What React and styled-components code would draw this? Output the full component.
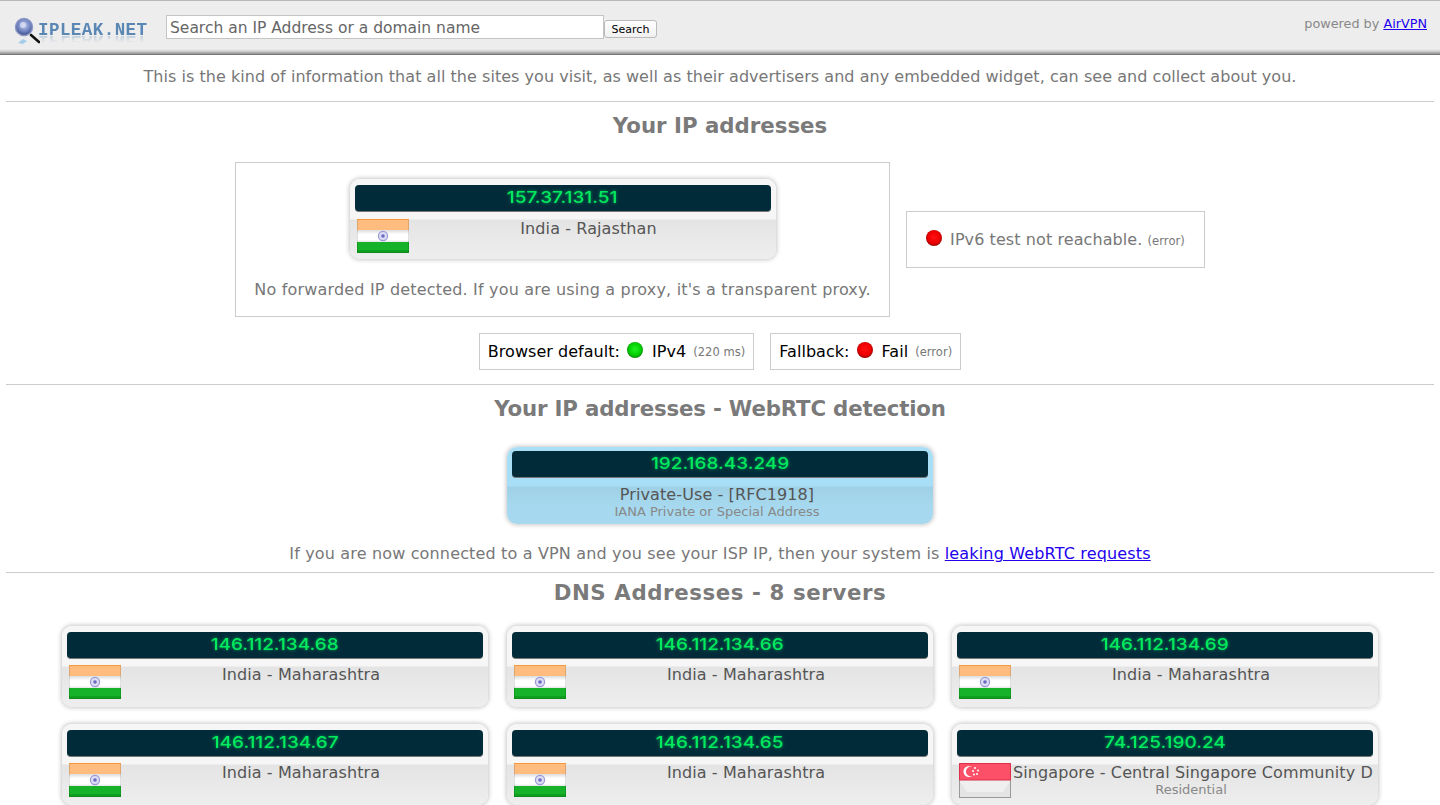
import React from "react";
import styled, { createGlobalStyle } from "styled-components";

const Global = createGlobalStyle`
  html, body { margin: 0; padding: 0; background: #fff; height: 805px; overflow: hidden; }
  body { font-family: "DejaVu Sans", Verdana, sans-serif; color: #777; }
  a { color: #2200ee; }
`;

const Header = styled.header`
  height: 55px;
  box-sizing: border-box;
  border-top: 1px solid #b8b8b8;
  border-bottom: 1px solid #777;
  background: linear-gradient(#ededed 0, #ededed 48px, #d4d4d4 50px, #8f8f8f 53px);
  display: flex;
  align-items: flex-start;
  padding: 14px 13px 0 14px;
`;
const LogoWrap = styled.div`
  width: 134px;
  height: 28px;
  margin-right: 18px;
  margin-top: 1px;
  display: flex;
  align-items: flex-start;
`;
const LogoText = styled.span`
  font-family: "Liberation Mono", monospace;
  font-weight: 700;
  font-size: 17.5px;
  line-height: 18px;
  margin: 5px 0 0 -2px;
  letter-spacing: 0.45px;
  color: #5b87b5;
  -webkit-box-reflect: below -7px linear-gradient(transparent 40%, rgba(255, 255, 255, 0.45));
`;
const SearchInput = styled.input`
  width: 438px;
  height: 24px;
  box-sizing: border-box;
  border: 1px solid #c4c4c4;
  background: #fff;
  font: 15.5px "DejaVu Sans", Verdana, sans-serif;
  color: #666;
  padding: 2px 3px 0;
  outline: none;
  &::placeholder { color: #666; opacity: 1; }
`;
const SearchButton = styled.button`
  width: 53px;
  height: 18px;
  margin-top: 5px;
  box-sizing: border-box;
  border: 1px solid #bbb;
  border-radius: 3px;
  background: linear-gradient(#fff, #f0f0f0);
  font: 11px "DejaVu Sans", Verdana, sans-serif;
  color: #000;
  padding: 0;
`;
const Powered = styled.div`
  margin-left: auto;
  font-size: 12.8px;
  line-height: 18px;
  color: #888;
`;
const Tagline = styled.p`
  margin: 0;
  height: 46px;
  box-sizing: border-box;
  padding-top: 12px;
  line-height: 20px;
  text-align: center;
  font-size: 16px;
  letter-spacing: 0.04px;
  color: #777;
`;
const Section = styled.section`
  margin: 0 6px;
  border-top: 1px solid #ccc;
  padding-top: ${(p) => p.$top}px;
  text-align: center;
`;
const Title = styled.h2`
  margin: 0;
  font-size: 21.3px;
  line-height: 26px;
  font-weight: 700;
  letter-spacing: ${(p) => p.$track || 0}px;
  color: #7a7a7a;
`;
const IpRow = styled.div`
  display: flex;
  justify-content: center;
  align-items: center;
  gap: 16px;
  margin-top: 23px;
`;
const Bordered = styled.div`
  border: 1px solid #ccc;
  box-sizing: border-box;
`;
const MainBox = styled(Bordered)`
  width: 655px;
  height: 155px;
  padding-top: 16px;
  display: flex;
  flex-direction: column;
  align-items: center;
`;
const NoForward = styled.div`
  margin-top: 21px;
  font-size: 16px;
  line-height: 20px;
  letter-spacing: 0.18px;
  color: #777;
`;
const V6Box = styled(Bordered)`
  width: 299px;
  height: 57px;
  display: flex;
  align-items: center;
  justify-content: center;
  gap: 8px;
  font-size: 16px;
  letter-spacing: 0.08px;
  color: #777;
`;
const Led = styled.i`
  display: inline-block;
  width: 16px;
  height: 16px;
  border-radius: 50%;
  flex: none;
  position: relative;
  top: -2px;
  background: radial-gradient(circle at 50% 45%, ${(p) =>
    p.$on
      ? "#22ee22 0, #00d000 50%, #0a7a0a 78%, #666 100%"
      : "#ff1010 0, #ee0000 50%, #8a0000 78%, #666 100%"});
`;
const Small = styled.small`
  font-size: 11.5px;
  color: #777;
`;
const StatusRow = styled.div`
  display: flex;
  justify-content: center;
  gap: 16px;
  margin-top: 16px;
  margin-bottom: 14px;
`;
const StatusBox = styled(Bordered)`
  height: 37px;
  padding: 0 8px;
  display: flex;
  align-items: center;
  gap: 7px;
  font-size: 16px;
  letter-spacing: 0.04px;
  color: #000;
  white-space: nowrap;
`;
const Gap = styled.span`
  margin-left: 2px;
`;
const CardEl = styled.div`
  width: 426px;
  height: ${(p) => p.$height}px;
  box-sizing: border-box;
  border-radius: 10px;
  padding: ${(p) => (p.$blue ? 4 : 6)}px 5px 0;
  flex: none;
  overflow: hidden;
  text-align: center;
  box-shadow: 0 0 4px 1px rgba(0, 0, 0, 0.22);
  background: ${(p) =>
    p.$blue
      ? "linear-gradient(#a9dff6 0, #a9dff6 39px, #9fd0e6 40px, #a6d9ef 60px)"
      : "linear-gradient(#f6f6f6 0, #f6f6f6 40px, #e4e4e4 41px, #eeeeee 100%)"};
`;
const IpBar = styled.div`
  height: 27px;
  border-radius: 4px;
  background: #022b3a;
  border-bottom: 1px solid #777;
  box-sizing: border-box;
  color: #00ea5e;
  font-family: Inter, sans-serif;
  font-weight: 500;
  font-size: 16.5px;
  line-height: 25px;
  text-shadow: 0 0 3px rgba(0, 255, 100, 0.6);
`;
const IpText = styled.span`
  display: inline-block;
  transform: scaleX(1.15);
`;
const CardBody = styled.div`
  display: flex;
  margin-top: ${(p) => p.$gap}px;
  padding: 0 ${(p) => (p.$blue ? 6 : 0)}px 0 2px;
`;
const CardText = styled.div`
  flex: 1;
  min-width: 0;
  overflow: hidden;
  white-space: nowrap;
  padding: 0 4px 0 2px;
  font-size: 16px;
  line-height: 19px;
  letter-spacing: 0.1px;
  color: #555;
`;
const Sub = styled.div`
  font-size: 13px;
  line-height: 15px;
  letter-spacing: 0;
  color: #888;
`;
const FlagSvg = styled.svg`
  flex: none;
  display: block;
`;
const WebRtcCenter = styled.div`
  display: flex;
  justify-content: center;
  margin-top: 25px;
`;
const Leak = styled.p`
  margin: 20px 0 8px;
  font-size: 16px;
  line-height: 20px;
  letter-spacing: 0.16px;
  color: #777;
`;
const DnsGrid = styled.div`
  display: grid;
  grid-template-columns: repeat(3, 426px);
  column-gap: 19px;
  row-gap: 17px;
  justify-content: center;
  margin-top: 20px;
`;

function IndiaFlag() {
  return (
    <FlagSvg width="52" height="34" viewBox="0 0 52 34">
      <defs>
        <linearGradient id="inWhite" x1="0" y1="0" x2="0" y2="1">
          <stop offset="0" stopColor="#dcdcdc" />
          <stop offset="0.35" stopColor="#ffffff" />
          <stop offset="0.8" stopColor="#ffffff" />
          <stop offset="1" stopColor="#e6e6e6" />
        </linearGradient>
      </defs>
      <rect width="52" height="11" fill="#ffbc7e" />
      <rect y="11" width="52" height="12" fill="url(#inWhite)" />
      <rect y="23" width="52" height="11" fill="#16b22a" />
      <rect y="31" width="52" height="3" fill="#0fa020" />
      <circle cx="26" cy="17" r="4.6" fill="#dcdcf4" stroke="#9a9ad8" strokeWidth="1.2" />
      <circle cx="26" cy="17" r="1.8" fill="#6a6ac0" />
      <rect x=".5" y=".5" width="51" height="33" fill="none" stroke="#000" strokeOpacity=".12" />
      <path d="M0 .5H52" stroke="#f2983e" />
    </FlagSvg>
  );
}

function SingaporeFlag() {
  return (
    <FlagSvg width="52" height="35" viewBox="0 0 52 35">
      <rect width="52" height="17" fill="#fb5068" />
      <rect y="17" width="52" height="18" fill="#e4e4e4" />
      <path d="M0 17 L8 29 H44 L52 17Z" fill="#efefef" />
      <circle cx="10" cy="8.5" r="5.5" fill="#fff" />
      <circle cx="12" cy="8.5" r="5" fill="#fb5068" />
      <g fill="#fff">
        <circle cx="16" cy="5" r="1" />
        <circle cx="19" cy="7.5" r="1" />
        <circle cx="14" cy="8" r="1" />
        <circle cx="15" cy="11.5" r="1" />
        <circle cx="18" cy="11" r="1" />
      </g>
      <rect x=".5" y=".5" width="51" height="34" fill="none" stroke="#999" />
      <path d="M.5 .5H51.5V17H.5Z" fill="none" stroke="#dc2f48" />
    </FlagSvg>
  );
}

function Logo() {
  return (
    <LogoWrap>
      <svg width="26" height="28" viewBox="0 0 26 28" style={{ flex: "none" }}>
        <defs>
          <radialGradient id="globe" cx="50%" cy="40%" r="60%">
            <stop offset="0" stopColor="#c4cdf0" />
            <stop offset="0.7" stopColor="#6478b8" />
            <stop offset="1" stopColor="#33406f" />
          </radialGradient>
        </defs>
        <path d="M4 27 L9 23 L13 25 L9 28Z" fill="#a5cdea" />
        <path d="M17 19 L25 26" stroke="#111" strokeWidth="2.6" strokeLinecap="round" />
        <circle cx="10" cy="11" r="8.5" fill="url(#globe)" stroke="#8b97c6" strokeWidth="1.5" />
        <circle cx="9" cy="9" r="3" fill="#e2e6f6" opacity=".65" />
      </svg>
      <LogoText>IPLEAK.NET</LogoText>
    </LogoWrap>
  );
}

function Card({ ip, place, sub, flag, height = 81, gap = 6, blue }) {
  return (
    <CardEl $height={height} $blue={blue}>
      <IpBar>
        <IpText>{ip}</IpText>
      </IpBar>
      <CardBody $gap={gap} $blue={blue}>
        {flag === "in" && <IndiaFlag />}
        {flag === "sg" && <SingaporeFlag />}
        <CardText>
          {place}
          {sub && <Sub>{sub}</Sub>}
        </CardText>
      </CardBody>
    </CardEl>
  );
}

const dns = [
  { ip: "146.112.134.68", place: "India - Maharashtra", flag: "in" },
  { ip: "146.112.134.66", place: "India - Maharashtra", flag: "in" },
  { ip: "146.112.134.69", place: "India - Maharashtra", flag: "in" },
  { ip: "146.112.134.67", place: "India - Maharashtra", flag: "in" },
  { ip: "146.112.134.65", place: "India - Maharashtra", flag: "in" },
  { ip: "74.125.190.24", place: "Singapore - Central Singapore Community D", sub: "Residential", flag: "sg" },
];

export default function App() {
  return (
    <>
      <Global />
      <Header>
        <Logo />
        <SearchInput placeholder="Search an IP Address or a domain name" />
        <SearchButton>Search</SearchButton>
        <Powered>
          powered by <a href="#airvpn">AirVPN</a>
        </Powered>
      </Header>
      <Tagline>
        This is the kind of information that all the sites you visit, as well as their advertisers and any embedded widget, can see and collect about you.
      </Tagline>
      <Section $top={11}>
        <Title>Your IP addresses</Title>
        <IpRow>
          <MainBox>
            <Card ip="157.37.131.51" place="India - Rajasthan" flag="in" height={80} gap={7} />
            <NoForward>No forwarded IP detected. If you are using a proxy, it's a transparent proxy.</NoForward>
          </MainBox>
          <V6Box>
            <Led />
            <span>
              IPv6 test not reachable. <Small>(error)</Small>
            </span>
          </V6Box>
        </IpRow>
        <StatusRow>
          <StatusBox>
            Browser default: <Led $on /> <Gap>IPv4</Gap> <Small>(220 ms)</Small>
          </StatusBox>
          <StatusBox>
            Fallback: <Led /> <Gap>Fail</Gap> <Small>(error)</Small>
          </StatusBox>
        </StatusRow>
      </Section>
      <Section $top={11}>
        <Title $track={-0.17}>Your IP addresses - WebRTC detection</Title>
        <WebRtcCenter>
          <Card ip="192.168.43.249" place="Private-Use - [RFC1918]" sub="IANA Private or Special Address" height={77} gap={7} blue />
        </WebRtcCenter>
        <Leak>
          If you are now connected to a VPN and you see your ISP IP, then your system is <a href="#webrtc">leaking WebRTC requests</a>
        </Leak>
      </Section>
      <Section $top={7}>
        <Title $track={0.6}>DNS Addresses - 8 servers</Title>
        <DnsGrid>
          {dns.map((d) => (
            <Card key={d.ip} {...d} />
          ))}
        </DnsGrid>
      </Section>
    </>
  );
}
